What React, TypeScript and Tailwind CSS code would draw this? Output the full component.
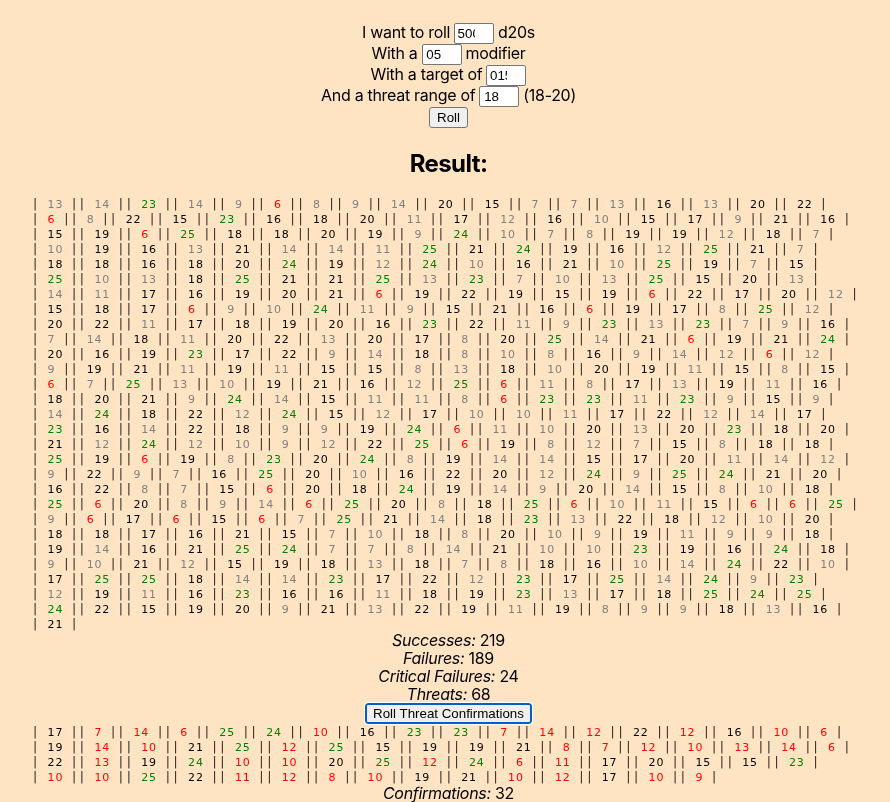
import React from "react";

const ROLLS = `13 14 23 14 9 6 8 9 14 20 15 7 7 13 16 13 20 22
6 8 22 15 23 16 18 20 11 17 12 16 10 15 17 9 21 16
15 19 6 25 18 18 20 19 9 24 10 7 8 19 19 12 18 7
10 19 16 13 21 14 14 11 25 21 24 19 16 12 25 21 7
18 18 16 18 20 24 19 12 24 10 16 21 10 25 19 7 15
25 10 13 18 25 21 21 25 13 23 7 10 13 25 15 20 13
14 11 17 16 19 20 21 6 19 22 19 15 19 6 22 17 20 12
15 18 17 6 9 10 24 11 9 15 21 16 6 19 17 8 25 12
20 22 11 17 18 19 20 16 23 22 11 9 23 13 23 7 9 16
7 14 18 11 20 22 13 20 17 8 20 25 14 21 6 19 21 24
20 16 19 23 17 22 9 14 18 8 10 8 16 9 14 12 6 12
9 19 21 11 19 11 15 15 8 13 18 10 20 19 11 15 8 15
6 7 25 13 10 19 21 16 12 25 6 11 8 17 13 19 11 16
18 20 21 9 24 14 15 11 11 8 6 23 23 11 23 9 15 9
14 24 18 22 12 24 15 12 17 10 10 11 17 22 12 14 17
23 16 14 22 18 9 9 19 24 6 11 10 20 13 20 23 18 20
21 12 24 12 10 9 12 22 25 6 19 8 12 7 15 8 18 18
25 19 6 19 8 23 20 24 8 19 14 14 15 17 20 11 14 12
9 22 9 7 16 25 20 10 16 22 20 12 24 9 25 24 21 20
16 22 8 7 15 6 20 18 24 19 14 9 20 14 15 8 10 18
25 6 20 8 9 14 6 25 20 8 18 25 6 10 11 15 6 6 25
9 6 17 6 15 6 7 25 21 14 18 23 13 22 18 12 10 20
18 18 17 16 21 15 7 10 18 8 20 10 9 19 11 9 9 18
19 14 16 21 25 24 7 7 8 14 21 10 10 23 19 16 24 18
9 10 21 12 15 19 18 13 18 7 8 18 16 10 14 24 22 10
17 25 25 18 14 14 23 17 22 12 23 17 25 14 24 9 23
12 19 11 16 23 16 16 11 18 19 23 13 17 18 25 24 25
24 22 15 19 20 9 21 13 22 19 11 19 8 9 9 18 13 16
21`;

const CONFIRMATIONS = `17 7 14 6 25 24 10 16 23 23 7 14 12 22 12 16 10 6
19 14 10 21 25 12 25 15 19 19 21 8 7 12 10 13 14 6
22 13 19 24 10 10 20 25 12 24 6 11 17 20 15 15 23
10 10 25 22 11 12 8 10 19 21 10 12 17 10 9`;

const rollColor = (n: number) =>
  n >= 23 ? "text-[#008000]" : n === 6 ? "text-[#ff0000]" : n < 15 ? "text-[#808080]" : "text-black";

const confirmColor = (n: number) =>
  n >= 23 ? "text-[#008000]" : n < 15 ? "text-[#ff0000]" : "text-black";

function DiceRows({ data, color }: { data: string; color: (n: number) => string }) {
  return (
    <div className="pl-[31.5px] font-['DejaVu_Sans_Mono',monospace] text-[12px] tracking-[0.578px] text-[#2a2520]">
      {data.split("\n").map((line, i) => (
        <div key={i} className="h-[15px] whitespace-pre leading-[15px]">
          {line.split(" ").map((n, j) => (
            <React.Fragment key={j}>
              {"| "}
              <span className={`-mr-[0.5px] ml-[0.5px] font-['DejaVu_Sans',sans-serif] text-[11px] leading-none tracking-[0.8px] ${color(Number(n))}`}>
                {n}
              </span>
              {" |"}
            </React.Fragment>
          ))}
        </div>
      ))}
    </div>
  );
}

function Field({ before, value, after }: { before: string; value: string; after?: string }) {
  return (
    <div className="flex h-[21px] items-center justify-center gap-1 whitespace-pre leading-[18px]">
      <span className="pb-[3px]">{before}</span>
      <span className="flex h-[21px] w-[40px] items-center rounded-[2px] border border-[#767676] bg-white pl-[2.5px]">
        <span className="w-[17.5px] overflow-hidden font-['Liberation_Sans',sans-serif] text-[13.33px] leading-[17px] tracking-normal">
          {value}
        </span>
      </span>
      {after && <span className="pb-[3px]">{after}</span>}
    </div>
  );
}

function Stat({ label, value }: { label: string; value: number }) {
  return (
    <div className="h-[18px] leading-[18px]">
      <em>{label}:</em> {value}
    </div>
  );
}

export default function App() {
  return (
    <div className="h-[802px] overflow-hidden bg-[#ffe4c4]">
      <div className="h-full pt-[23px] font-['Inter',sans-serif] text-[16px] tracking-[-0.3px] text-black will-change-transform">
        <div className="pl-[7px] text-center">
          <Field before="I want to roll" value="500" after="d20s" />
          <Field before="With a" value="05" after="modifier" />
          <Field before="With a target of" value="015" />
          <Field before="And a threat range of" value="18" after="(18-20)" />
          <div className="flex h-[21px] justify-center">
            <button className="h-[21px] w-[39px] rounded-[3px] border border-[#767676] bg-[#efefef] font-['Liberation_Sans',sans-serif] text-[13.33px] leading-[19px] tracking-normal">
              Roll
            </button>
          </div>
          <h2 className="mt-[21px] h-[29px] text-[24px] font-bold leading-[29px] tracking-[-0.6px]">Result:</h2>
        </div>
        <div className="mt-[19px]">
          <DiceRows data={ROLLS} color={rollColor} />
        </div>
        <div className="-mt-px pl-[7px] text-center">
          <Stat label="Successes" value={219} />
          <Stat label="Failures" value={189} />
          <Stat label="Critical Failures" value={24} />
          <Stat label="Threats" value={68} />
          <div className="flex h-[21px] justify-center">
            <button className="h-[21px] w-[167px] rounded-[3px] border-2 border-[#005fcc] bg-[#efefef] font-['Liberation_Sans',sans-serif] text-[13.33px] leading-[17px] tracking-normal outline outline-1 outline-white">
              Roll Threat Confirmations
            </button>
          </div>
        </div>
        <div className="mt-px">
          <DiceRows data={CONFIRMATIONS} color={confirmColor} />
        </div>
        <div className="-mt-px pl-[7px] text-center">
          <Stat label="Confirmations" value={32} />
        </div>
      </div>
    </div>
  );
}
